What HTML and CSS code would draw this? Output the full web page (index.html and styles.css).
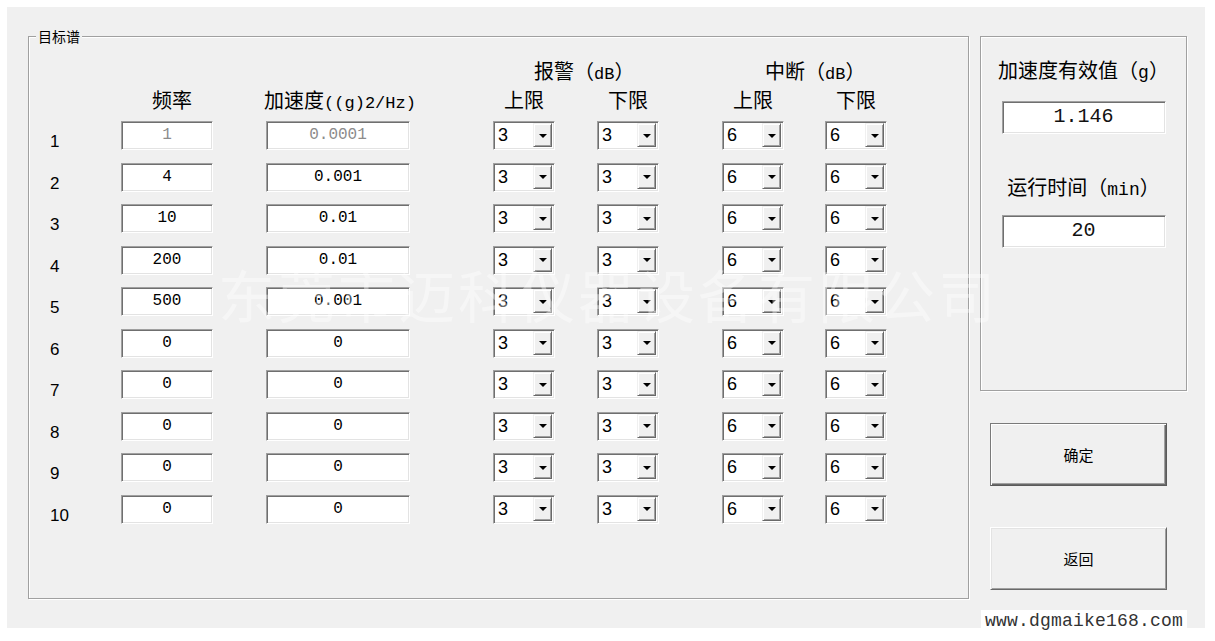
FILE: index.html
```html
<!DOCTYPE html>
<html lang="zh-CN">
<head>
<meta charset="utf-8">
<title>目标谱</title>
<link rel="stylesheet" href="styles.css">
</head>
<body>
<div class="window">
  <div class="group">
    <span class="group-title">目标谱</span>
    <div class="thead">
      <div class="hrow">
        <div class="h-alarm">报警（<span class="lat">dB</span>）</div>
        <div class="h-break">中断（<span class="lat">dB</span>）</div>
      </div>
      <div class="hrow">
        <div class="h-freq">频率</div>
        <div class="h-acc">加速度<span class="lat">((g)2/Hz)</span></div>
        <div class="h-lim">上限</div>
        <div class="h-lim">下限</div>
        <div class="h-lim">上限</div>
        <div class="h-lim">下限</div>
      </div>
    </div>
    <div class="tbody">
      <div class="row"><div class="num">1</div><div class="field w-freq disabled">1</div><div class="field w-acc disabled">0.0001</div><div class="combo"><span class="val">3</span><span class="arrow"></span></div><div class="combo"><span class="val">3</span><span class="arrow"></span></div><div class="combo"><span class="val">6</span><span class="arrow"></span></div><div class="combo"><span class="val">6</span><span class="arrow"></span></div></div>
      <div class="row"><div class="num">2</div><div class="field w-freq">4</div><div class="field w-acc">0.001</div><div class="combo"><span class="val">3</span><span class="arrow"></span></div><div class="combo"><span class="val">3</span><span class="arrow"></span></div><div class="combo"><span class="val">6</span><span class="arrow"></span></div><div class="combo"><span class="val">6</span><span class="arrow"></span></div></div>
      <div class="row"><div class="num">3</div><div class="field w-freq">10</div><div class="field w-acc">0.01</div><div class="combo"><span class="val">3</span><span class="arrow"></span></div><div class="combo"><span class="val">3</span><span class="arrow"></span></div><div class="combo"><span class="val">6</span><span class="arrow"></span></div><div class="combo"><span class="val">6</span><span class="arrow"></span></div></div>
      <div class="row"><div class="num">4</div><div class="field w-freq">200</div><div class="field w-acc">0.01</div><div class="combo"><span class="val">3</span><span class="arrow"></span></div><div class="combo"><span class="val">3</span><span class="arrow"></span></div><div class="combo"><span class="val">6</span><span class="arrow"></span></div><div class="combo"><span class="val">6</span><span class="arrow"></span></div></div>
      <div class="row"><div class="num">5</div><div class="field w-freq">500</div><div class="field w-acc">0.001</div><div class="combo"><span class="val">3</span><span class="arrow"></span></div><div class="combo"><span class="val">3</span><span class="arrow"></span></div><div class="combo"><span class="val">6</span><span class="arrow"></span></div><div class="combo"><span class="val">6</span><span class="arrow"></span></div></div>
      <div class="row"><div class="num">6</div><div class="field w-freq">0</div><div class="field w-acc">0</div><div class="combo"><span class="val">3</span><span class="arrow"></span></div><div class="combo"><span class="val">3</span><span class="arrow"></span></div><div class="combo"><span class="val">6</span><span class="arrow"></span></div><div class="combo"><span class="val">6</span><span class="arrow"></span></div></div>
      <div class="row"><div class="num">7</div><div class="field w-freq">0</div><div class="field w-acc">0</div><div class="combo"><span class="val">3</span><span class="arrow"></span></div><div class="combo"><span class="val">3</span><span class="arrow"></span></div><div class="combo"><span class="val">6</span><span class="arrow"></span></div><div class="combo"><span class="val">6</span><span class="arrow"></span></div></div>
      <div class="row"><div class="num">8</div><div class="field w-freq">0</div><div class="field w-acc">0</div><div class="combo"><span class="val">3</span><span class="arrow"></span></div><div class="combo"><span class="val">3</span><span class="arrow"></span></div><div class="combo"><span class="val">6</span><span class="arrow"></span></div><div class="combo"><span class="val">6</span><span class="arrow"></span></div></div>
      <div class="row"><div class="num">9</div><div class="field w-freq">0</div><div class="field w-acc">0</div><div class="combo"><span class="val">3</span><span class="arrow"></span></div><div class="combo"><span class="val">3</span><span class="arrow"></span></div><div class="combo"><span class="val">6</span><span class="arrow"></span></div><div class="combo"><span class="val">6</span><span class="arrow"></span></div></div>
      <div class="row"><div class="num">10</div><div class="field w-freq">0</div><div class="field w-acc">0</div><div class="combo"><span class="val">3</span><span class="arrow"></span></div><div class="combo"><span class="val">3</span><span class="arrow"></span></div><div class="combo"><span class="val">6</span><span class="arrow"></span></div><div class="combo"><span class="val">6</span><span class="arrow"></span></div></div>
    </div>
  </div>
  <div class="side">
    <div class="rms-box">
      <div class="side-label">加速度有效值（<span class="lat">g</span>）</div>
      <div class="field field-lg first">1.146</div>
      <div class="side-label second">运行时间（<span class="lat">min</span>）</div>
      <div class="field field-lg">20</div>
    </div>
    <div class="btn default">确定</div>
    <div class="btn back">返回</div>
  </div>
</div>
<div class="watermark">东莞市迈科仪器设备有限公司</div>
<div class="url">www.dgmaike168.com</div>
</body>
</html>
```

FILE: styles.css
```css
* { box-sizing: border-box; }

body {
  margin: 0;
  background: #ffffff;
  font-family: "Liberation Mono", "Noto Sans CJK SC", monospace;
  color: #000;
  position: relative;
  width: 1215px;
  height: 641px;
  overflow: hidden;
}

.window {
  margin: 7px 0 0 7px;
  width: 1198px;
  height: 621px;
  background: #f0f0f0;
  display: flex;
  align-items: flex-start;
  padding: 29px 0 0 21px;
}

.group {
  position: relative;
  width: 941px;
  height: 563px;
  margin-right: 11px;
  border: 1px solid #a0a0a0;
  box-shadow: inset 1px 1px 0 #fff, 1px 1px 0 #fff;
  padding: 22px 0 0 21px;
}

.group-title {
  position: absolute;
  top: -10px;
  left: 7px;
  padding: 0 2px;
  background: #f0f0f0;
  font-family: "Noto Sans CJK SC", sans-serif;
  font-size: 14px;
  line-height: 18px;
}

.hrow,
.row {
  display: grid;
  grid-template-columns: 71px 145px 227px 104px 125px 103px 62px;
}

.hrow {
  grid-template-rows: 24px;
  height: 24px;
  font-family: "Noto Sans CJK SC", sans-serif;
  font-size: 20px;
  line-height: 24px;
}

.hrow > div {
  height: 24px;
}

.hrow + .hrow {
  margin-top: 5px;
}

.lat {
  font-family: "Liberation Mono", monospace;
  font-size: 17px;
  line-height: 1;
}

.h-alarm {
  grid-column: 4 / 6;
  padding-left: 41px;
}

.h-break {
  grid-column: 6 / 8;
  padding-left: 43px;
}

.h-freq {
  grid-column: 2;
  width: 92px;
  text-align: center;
  padding-left: 10px;
}

.h-acc {
  width: 160px;
  text-align: center;
  margin-left: -6px;
}

.h-lim {
  width: 62px;
  text-align: center;
}

.tbody {
  margin-top: 9px;
  display: flex;
  flex-direction: column;
  gap: 12.55px;
}

.row {
  grid-template-rows: 29px;
  height: 29px;
}

.num {
  font-family: "Liberation Sans", sans-serif;
  font-size: 17px;
  line-height: 24px;
  padding-top: 9px;
}

.field {
  height: 29px;
  background: #fff;
  border: 1px solid;
  border-color: #a0a0a0 #ffffff #ffffff #a0a0a0;
  box-shadow: inset 1px 1px 0 #6f6f6f, inset -1px -1px 0 #e3e3e3;
  text-align: center;
  font-family: "Liberation Mono", monospace;
  font-size: 16px;
  line-height: 26px;
  color: #000;
}

.w-freq { width: 92px; }
.w-acc { width: 144px; }

.disabled { color: #8c8c8c; }

.combo {
  width: 62px;
  height: 29px;
  background: #fff;
  border: 1px solid;
  border-color: #a0a0a0 #ffffff #ffffff #a0a0a0;
  box-shadow: inset 1px 1px 0 #6f6f6f, inset -1px -1px 0 #e3e3e3;
  display: flex;
  align-items: stretch;
  padding: 1px 2px 2px 2px;
}

.combo .val {
  flex: 1;
  padding-left: 2px;
  font-family: "Liberation Sans", sans-serif;
  font-size: 18px;
  line-height: 25px;
  color: #000;
}

.combo .arrow {
  width: 19px;
  background: #f0f0f0;
  border: 1px solid;
  border-color: #f0f0f0 #696969 #696969 #f0f0f0;
  box-shadow: inset 1px 1px 0 #fff, inset -1px -1px 0 #a0a0a0;
  display: flex;
  align-items: center;
  justify-content: center;
}

.combo .arrow::after {
  content: "";
  width: 0;
  height: 0;
  border-left: 4px solid transparent;
  border-right: 4px solid transparent;
  border-top: 4px solid #000;
  margin-top: 1px;
}

.side {
  width: 207px;
  display: flex;
  flex-direction: column;
}

.rms-box {
  height: 355px;
  border: 1px solid #a0a0a0;
  box-shadow: inset 1px 1px 0 #fff, 1px 1px 0 #fff;
  display: flex;
  flex-direction: column;
  align-items: center;
  padding-top: 20px;
}

.side-label {
  height: 26px;
  font-family: "Noto Sans CJK SC", sans-serif;
  font-size: 20px;
  line-height: 26px;
}

.side-label .lat {
  font-size: 18px;
}

.side-label.second {
  margin-top: 40px;
}

.field-lg {
  width: 164px;
  height: 33px;
  font-size: 20px;
  line-height: 30px;
  color: #111;
  margin-top: 15px;
}

.field-lg.first {
  margin-top: 18px;
}

.btn {
  margin-left: 10px;
  width: 177px;
  height: 63px;
  background: #f0f0f0;
  font-family: "Noto Sans CJK SC", sans-serif;
  font-size: 15px;
  display: flex;
  align-items: center;
  justify-content: center;
  border: 1px solid;
}

.btn.default {
  margin-top: 32px;
  border-color: #7a7a7a #5a5a5a #5a5a5a #7a7a7a;
  box-shadow: inset 1px 1px 0 #fff, inset -1px -1px 0 #696969, inset -2px -2px 0 #a0a0a0;
}

.btn.back {
  margin-top: 41px;
  border-color: #ffffff #696969 #696969 #ffffff;
  box-shadow: inset 1px 1px 0 #e3e3e3, inset -1px -1px 0 #a0a0a0;
}

.watermark {
  position: absolute;
  left: 218px;
  top: 263px;
  font-family: "Noto Sans CJK SC", sans-serif;
  font-size: 57px;
  line-height: 60px;
  letter-spacing: 3px;
  color: rgba(255, 255, 255, 0.4);
  white-space: nowrap;
  pointer-events: none;
}

.url {
  position: absolute;
  left: 981px;
  top: 610px;
  padding: 0 4px;
  background: #fff;
  font-family: "Liberation Mono", monospace;
  font-size: 18px;
  letter-spacing: 0.2px;
  line-height: 22px;
  color: #333;
  white-space: nowrap;
}
```
